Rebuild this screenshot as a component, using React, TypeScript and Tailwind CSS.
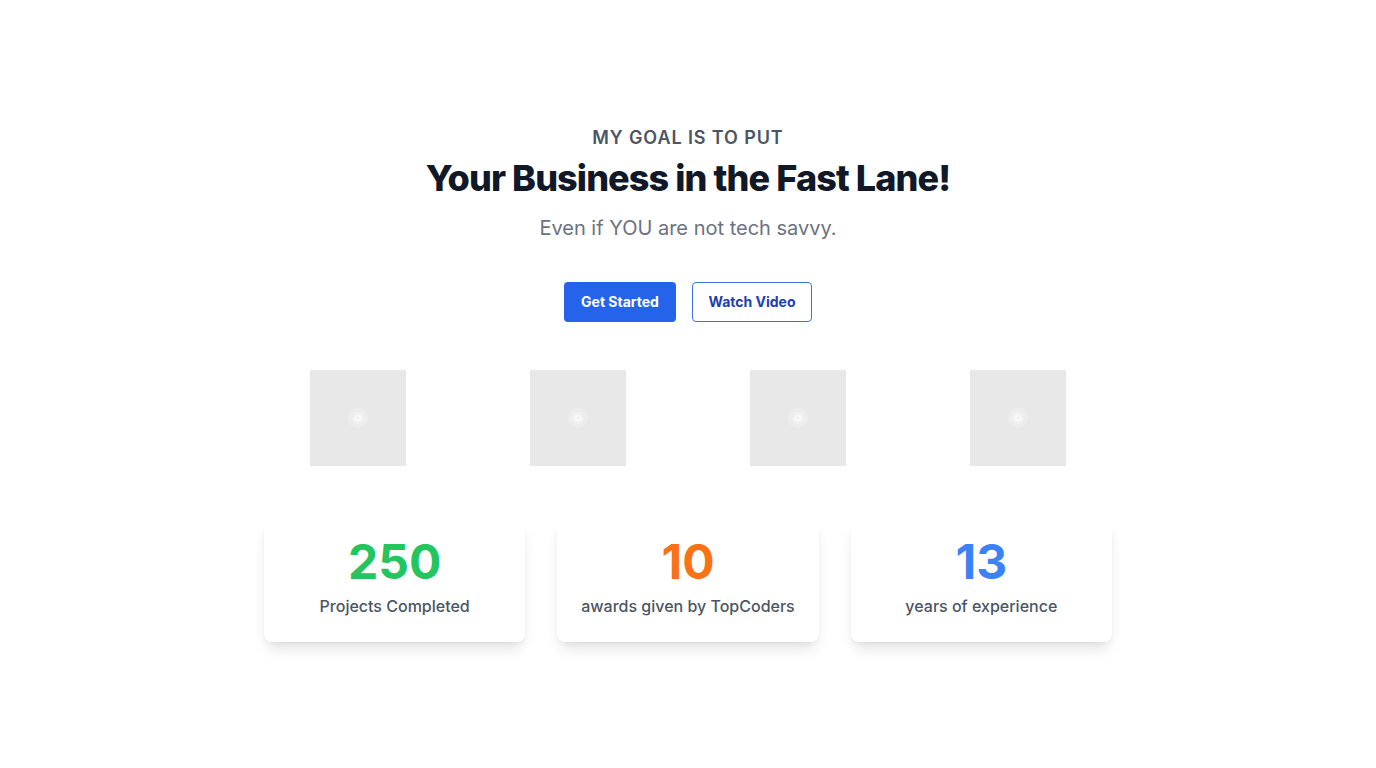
import React from 'react';

const stats = [
  { value: '250', label: 'Projects Completed', color: 'text-[#22c55e]' },
  { value: '10', label: 'awards given by TopCoders', color: 'text-[#f97316]' },
  { value: '13', label: 'years of experience', color: 'text-[#3b82f6]' },
];

const Placeholder = () => (
  <div className="w-24 h-24 bg-[#e8e8e8] flex items-center justify-center">
    <svg width="24" height="24" viewBox="0 0 24 24">
      <circle cx="12" cy="12" r="10" fill="#ededed" />
      <circle cx="12" cy="12" r="6" fill="#f2f2f2" />
      <circle cx="12" cy="12" r="2.5" fill="none" stroke="#fafafa" strokeWidth="1.5" />
    </svg>
  </div>
);

export default function App() {
  return (
    <div className="min-h-screen bg-white font-['Inter',sans-serif]">
      <section className="pt-[124px] pb-24 text-center">
        <p className="text-lg leading-7 font-semibold tracking-wider text-[#4b5563] uppercase">
          My goal is to put
        </p>
        <h1 className="mt-[6px] text-4xl leading-10 font-extrabold tracking-tight text-[#111827]">
          Your Business in the Fast Lane!
        </h1>
        <p className="mt-4 text-xl leading-7 text-[#6b7280]">Even if YOU are not tech savvy.</p>

        <div className="mt-10 flex justify-center gap-4">
          <button className="h-10 w-[112px] rounded bg-[#2563eb] text-white text-sm font-bold">
            Get Started
          </button>
          <button className="h-10 w-[120px] rounded border border-[#3b74e0] text-[#1e40af] text-sm font-bold">
            Watch Video
          </button>
        </div>

        <div className="mt-12 mx-auto max-w-[880px] grid grid-cols-4">
          {[0, 1, 2, 3].map((i) => (
            <div key={i} className="flex justify-center">
              <Placeholder />
            </div>
          ))}
        </div>

        <div className="mt-[52px] mx-auto max-w-4xl px-6 grid grid-cols-3 gap-8">
          {stats.map((s) => (
            <div key={s.value} className="bg-white rounded-lg shadow-lg pt-5 pb-6 px-4">
              <div className={`text-5xl leading-[48px] font-bold ${s.color}`}>{s.value}</div>
              <div className="mt-2 text-base leading-6 font-medium text-[#4b5563]">{s.label}</div>
            </div>
          ))}
        </div>
      </section>
    </div>
  );
}
